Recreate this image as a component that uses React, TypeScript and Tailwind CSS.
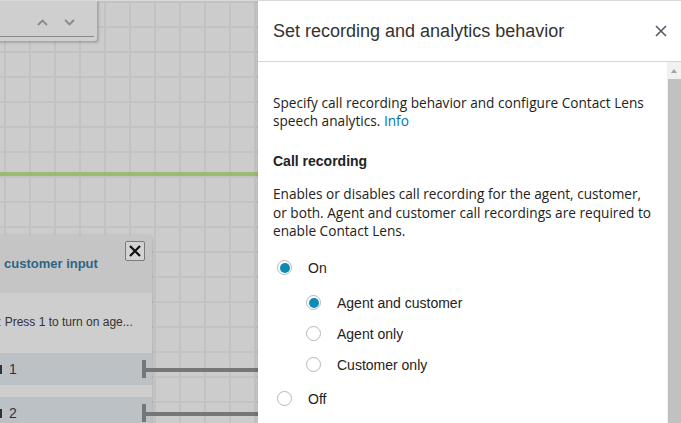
import React from "react";

function Chevron({ up }: { up?: boolean }) {
  return (
    <svg width="11" height="7" viewBox="0 0 11 7" fill="none">
      <polyline
        points={up ? "1,6 5.5,1.5 10,6" : "1,1 5.5,5.5 10,1"}
        stroke="#8a8a8a"
        strokeWidth="1.8"
      />
    </svg>
  );
}

function Radio({ checked }: { checked?: boolean }) {
  return (
    <span className="flex h-[15px] w-[15px] shrink-0 items-center justify-center rounded-full border border-[#b4b9bd] bg-white">
      {checked && <span className="h-[10px] w-[10px] rounded-full bg-[#0b8ab5]" />}
    </span>
  );
}

function Option({
  label,
  checked,
  nested,
  className,
}: {
  label: string;
  checked?: boolean;
  nested?: boolean;
  className?: string;
}) {
  return (
    <label
      className={`flex h-[20px] items-center gap-[16px] ${nested ? "ml-[33px]" : "ml-[4px]"} ${className ?? ""}`}
    >
      <Radio checked={checked} />
      <span className="text-[14px] leading-[18px] text-[#222]">{label}</span>
    </label>
  );
}

function Branch({ label, className }: { label: string; className?: string }) {
  return (
    <div className={`relative flex h-[32px] items-center bg-[#bcc1c6] ${className ?? ""}`}>
      <span className="ml-[12px] h-[9px] w-[2px] bg-[#333]" />
      <span className="ml-[7px] text-[14px] leading-[16px] text-[#333]">{label}</span>
      {/* connector */}
      <span className="absolute left-[154px] top-[7px] h-[18px] w-[3.5px] bg-[#767676]" />
      <span className="absolute left-[157px] top-[15px] h-[3.5px] w-[140px] bg-[#767676]" />
    </div>
  );
}

function Canvas() {
  return (
    <div className="relative w-[258px] shrink-0 overflow-hidden bg-[#cccccc] bg-[linear-gradient(to_right,#c2c2c2_2px,transparent_2px),linear-gradient(to_bottom,#c2c2c2_2px,transparent_2px)] bg-[size:25px_25px] bg-[position:4px_0px]">
      {/* search / toolbar box */}
      <div className="absolute left-[-10px] top-[-1px] flex h-[41px] w-[107px] flex-col rounded-br-[3px] bg-[#cfcfcf] shadow-[2px_2px_2px_rgba(0,0,0,0.18)]">
        <div className="flex justify-end gap-[16px] pr-[22px] pt-[19px]">
          <Chevron up />
          <Chevron />
        </div>
        <div className="mr-[3px] mt-[10px] h-px bg-[#8a8a8a]" />
      </div>

      {/* green connection line */}
      <div className="absolute left-0 top-[171px] h-[4px] w-full bg-[#9cbb72]" />

      {/* flow block */}
      <div className="absolute bottom-[-20px] left-[-12px] top-[234px] w-[164px] rounded-tr-[5px] bg-[#cecece] shadow-[1px_0_2px_rgba(0,0,0,0.12)]">
        <div className="relative h-[58px] rounded-tr-[5px] bg-[#c5c5c5] pl-[16px] pt-[16px]">
          <span className="whitespace-nowrap text-[13px] font-bold leading-[16px] text-[#2c6585]">
            customer input
          </span>
          <button className="absolute right-[7px] top-[6px] flex h-[20px] w-[20px] items-center justify-center rounded-[2px] border border-[#7a7a7a] bg-[#d3d3d3]">
            <svg width="14" height="14" viewBox="0 0 14 14">
              <path d="M2 2 L12 12 M12 2 L2 12" stroke="#111" strokeWidth="2.2" />
            </svg>
          </button>
        </div>
        <p className="whitespace-nowrap pl-[10px] pt-[22px] text-[12px] leading-[14px] text-[#333]">
          : Press 1 to turn on age...
        </p>
        <Branch label="1" className="mt-[24px]" />
        <Branch label="2" className="mt-[12px]" />
      </div>
    </div>
  );
}

function Panel() {
  return (
    <div className="relative z-10 flex min-w-0 flex-1 flex-col bg-white shadow-[-1px_0_3px_rgba(0,0,0,0.12)]">
      <div className="flex h-[61px] shrink-0 items-center justify-between border-b border-[#d5d5d5] pl-[15px] pr-[14px]">
        <h2 className="text-[18px] font-normal leading-[22px] text-[#333]">
          Set recording and analytics behavior
        </h2>
        <button>
          <svg width="12" height="12" viewBox="0 0 12 12">
            <path d="M1 1 L11 11 M11 1 L1 11" stroke="#545b64" strokeWidth="1.6" />
          </svg>
        </button>
      </div>

      <div className="flex min-h-0 flex-1">
        <div className="flex-1 pl-[15px] pr-[13px] pt-[32px]">
          <p className="font-['Open_Sans',sans-serif] text-[13.65px] leading-[18px] text-[#222]">
            Specify call recording behavior and configure Contact Lens speech analytics.{" "}
            <a className="text-[#0073bb]">Info</a>
          </p>

          <h3 className="mt-[22px] text-[14px] font-bold leading-[18px] text-[#222]">
            Call recording
          </h3>
          <p className="mt-[15px] font-['Open_Sans',sans-serif] text-[13.65px] leading-[18.5px] text-[#222]">
            Enables or disables call recording for the agent, customer, or both. Agent and
            customer call recordings are required to enable Contact Lens.
          </p>

          <Option label="On" checked className="mt-[17px]" />
          <Option label="Agent and customer" checked nested className="mt-[15px]" />
          <Option label="Agent only" nested className="mt-[11px]" />
          <Option label="Customer only" nested className="mt-[11px]" />
          <Option label="Off" className="mt-[14px]" />
        </div>

        {/* scrollbar */}
        <div className="flex w-[14px] shrink-0 flex-col bg-[#f1f1f1]">
          <div className="flex h-[17px] items-center justify-center">
            <span className="h-0 w-0 border-x-[3.5px] border-b-[4px] border-x-transparent border-b-[#a3a3a3]" />
          </div>
          <div className="ml-px flex-1 bg-[#c1c1c1]" />
        </div>
      </div>
    </div>
  );
}

export default function App() {
  return (
    <div className="flex h-[423px] w-[681px] overflow-hidden border-t border-[#d9d9d9] font-['Liberation_Sans',Arial,sans-serif]">
      <Canvas />
      <Panel />
    </div>
  );
}
